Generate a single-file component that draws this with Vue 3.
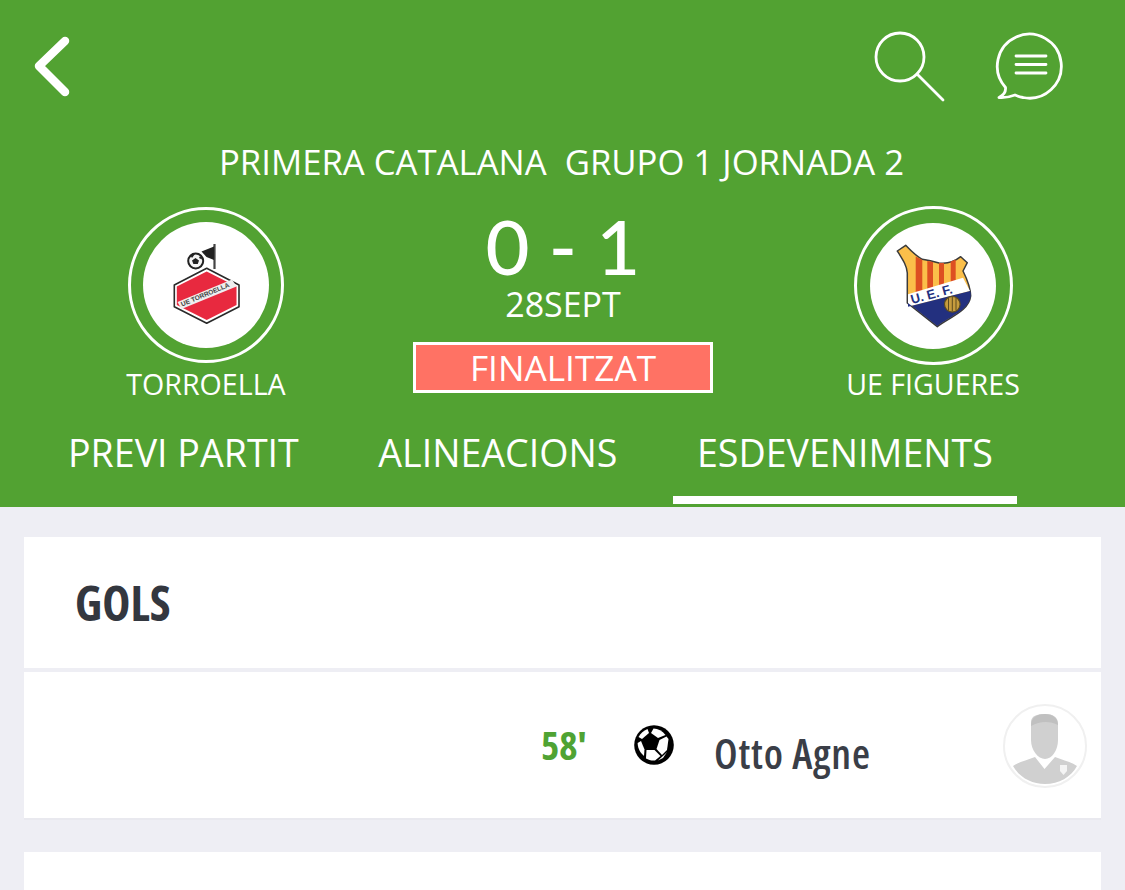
<script setup>
const tabs = [
  { label: 'PREVI PARTIT', active: false },
  { label: 'ALINEACIONS', active: false },
  { label: 'ESDEVENIMENTS', active: true }
]
</script>

<template>
  <div class="page">
    <header class="head">
      <div class="topbar">
        <svg class="back" width="50" height="70" viewBox="0 0 50 70" fill="none">
          <path d="M34 6 L8 31 L34 57" stroke="#fff" stroke-width="8.5" stroke-linecap="round" stroke-linejoin="round" />
        </svg>
        <div class="actions">
          <svg width="76" height="76" viewBox="0 0 76 76" fill="none" stroke="#fff" stroke-width="2.8">
            <circle cx="27" cy="27" r="24" />
            <path d="M44 44 L70 70" stroke-linecap="round" />
          </svg>
          <svg class="bubble" width="80" height="80" viewBox="0 0 80 80" fill="none" stroke="#fff" stroke-width="2.8" stroke-linejoin="round">
            <path d="M33 69.5 A32 32 0 1 0 15.5 59.5 C16 64 14 67 9 69.5 C15 70 21 68.5 25 67 C27.5 68 30 69 33 69.5 Z" />
            <path d="M26 28 H56 M26 36.5 H56 M26 45 H56" stroke-linecap="round" />
          </svg>
        </div>
      </div>

      <div class="title">PRIMERA CATALANA&nbsp;&nbsp;GRUPO 1 JORNADA 2</div>

      <div class="match">
        <div class="team team-left">
          <div class="ring">
            <div class="crest">
              <svg width="126" height="126" viewBox="0 0 126 126">
                <path d="M71.5 22 V47" stroke="#444" stroke-width="2.2" />
                <path d="M71 24.5 L58.5 29.5 L63.5 35 L71 38 Z" fill="#222" />
                <circle cx="52.7" cy="39" r="7.5" fill="#f4f4f4" stroke="#222" stroke-width="2" />
                <path d="M52.5 36 L56 38.5 L54.8 42 L50.4 42 L49 38.5 Z M47 33 L52 32 L49 36 Z M57 34 L60 38 L56 36 Z" fill="#222" />
                <path d="M63.7 46.3 L96 63 V84.7 L63.7 101.3 L31.3 84.7 V63 Z" fill="#fff" stroke="#2a2a2a" stroke-width="1.6" stroke-linejoin="round" />
                <path d="M63.7 49.5 L93.5 64.5 V83 L63.7 98 L33.8 83 V64.5 Z" fill="#e8293f" />
                <path d="M34.5 80 L89 57.5 L93.5 64.5 L38.5 87 Z" fill="#eee" />
                <text class="crest-t1" x="0" y="0" transform="translate(39 84.5) rotate(-22.5)">UE TORROELLA</text>
              </svg>
            </div>
          </div>
          <div class="name">TORROELLA</div>
        </div>

        <div class="center">
          <div class="score">0 - 1</div>
          <div class="date">28SEPT</div>
          <div class="status">FINALITZAT</div>
        </div>

        <div class="team team-right">
          <div class="ring ring-big">
            <div class="crest">
              <svg width="126" height="126" viewBox="0 0 126 126">
                <path d="M35.7 22.3 L27.3 28 C33 37 37 43 37.3 50 L37.3 80 L67.3 103.7 C80 94 99 88 100.7 73 C100.5 64 97 56 93 48 L97.3 39.7 L90.7 33.7 C84 39 76 41 69 40 C62 38 57 37 52.3 36.3 C46 33 41 28 35.7 22.3 Z" fill="#fbbf4a" stroke="#3a3a3a" stroke-width="1.5" stroke-linejoin="round" />
                <path d="M45.7 33.5 L52.3 37 V69 L45.7 71 Z M57.3 38 L63 39 V65 L57.3 66.7 Z M69 40 L74 40 V62.5 L69 64 Z M80.7 38.5 L85.7 36.5 V59 L80.7 60.5 Z" fill="#dd4f22" />
                <path d="M38 71.3 L93 54.7 L100 68 L38 83.7 Z" fill="#fff" />
                <path d="M38 83.7 L100 68 C101 70 100.7 71 100.7 73 C99 87 80 93.5 67.3 103 L38 80 Z" fill="#23307f" />
                <text class="crest-t2" x="0" y="0" transform="translate(42 81) rotate(-15)">U. E. F.</text>
                <circle cx="82.3" cy="81.3" r="7.8" fill="#c79c3e" stroke="#5e4c1d" stroke-width="1.2" />
                <path d="M78.5 75 V87.5 M82.3 74 V88.5 M86 75 V87.5" stroke="#5e4c1d" stroke-width="1" />
              </svg>
            </div>
          </div>
          <div class="name">UE FIGUERES</div>
        </div>
      </div>

      <nav class="tabs">
        <div v-for="t in tabs" :key="t.label" class="tab" :class="{ on: t.active }">{{ t.label }}</div>
      </nav>
    </header>

    <main class="body">
      <section class="card">
        <h2 class="card-title">GOLS</h2>
        <div class="goal">
          <span class="minute">58'</span>
          <svg class="ball" width="40" height="40" viewBox="0 0 40 40">
            <circle cx="20" cy="20" r="19.8" fill="#000" />
            <path d="M4.5 12 L8 14 L15 8 L13.5 4 C9.5 5.5 6.5 8.5 4.5 12 Z" fill="#fff" />
            <path d="M17 8 L24 13 L31.5 10 C28.5 6 24 3.8 19.5 3.5 Z" fill="#fff" />
            <path d="M25.5 15 L22.5 24 L28 30 L33 25 L34.5 14 L32.5 11.5 Z" fill="#fff" />
            <path d="M12.5 25 L20.5 25 L26.5 31 L21 35.5 C17.5 35.8 14.5 35 12 33.5 Z" fill="#fff" />
            <path d="M7 16 L10.5 24.5 L10 31 C6.5 28 4 24 3.6 18 Z" fill="#fff" />
            <path d="M30 30 L33 27 L29 33 L24 35.5 Z" fill="#fff" />
          </svg>
          <span class="player">Otto Agne</span>
          <div class="avatar">
            <svg width="80" height="80" viewBox="0 0 80 80">
              <path d="M26 16 C26 10 32 8 40 8 C48 8 53 11 53 18 L53 34 C53 44 47 53 40 53 C33 53 26 44 26 34 Z" fill="#d0d0d0" />
              <path d="M26 20 C26 11 32 8 40 8 C48 8 53 12 53 19 C45 15 35 15 26 20 Z" fill="#c0c0c0" />
              <path d="M8 60 C14 56 22 54 30 51 L39.5 63 L50 51 C58 54 66 56 72 60 C66 71 54 78 40 78 C26 78 14 71 8 60 Z" fill="#d0d0d0" />
              <path d="M55 59 H62 V65 L58.5 69 L55 65 Z" fill="#f4f4f4" />
            </svg>
          </div>
        </div>
      </section>
      <section class="card next"></section>
    </main>
  </div>
</template>

<style>
html, body { margin: 0; padding: 0; background: #eeeef4; }
</style>

<style scoped>
.page {
  width: 1125px;
  height: 890px;
  overflow: hidden;
  background: #eeeef4;
  font-family: "Open Sans", "Liberation Sans", sans-serif;
}
.head {
  height: 507px;
  background: #52a232;
  color: #fff;
  display: flex;
  flex-direction: column;
  font-weight: 400;
}
.topbar {
  height: 140px;
  padding: 35px 55px 0 31px;
  box-sizing: border-box;
  display: flex;
  justify-content: space-between;
  align-items: flex-start;
}
.back { display: block; }
.actions {
  display: flex;
  gap: 41px;
  margin-top: -5px;
}
.bubble { margin-top: -2px; }
.title {
  height: 44px;
  line-height: 44px;
  text-align: center;
  font-size: 34.7px;
  padding-right: 2px;
  white-space: nowrap;
}
.match {
  margin-top: 22px;
  display: grid;
  grid-template-columns: 413px 300px 412px;
  height: 196px;
}
.team {
  display: flex;
  flex-direction: column;
  align-items: center;
}
.team-left { padding-right: 1px; }
.team-right { margin-left: 28px; }
.ring {
  width: 156px;
  height: 156px;
  box-sizing: border-box;
  border: 3px solid #fff;
  border-radius: 50%;
  display: flex;
  align-items: center;
  justify-content: center;
  margin-top: 1px;
}
.ring-big { width: 159px; height: 159px; margin-top: 0; }
.crest {
  width: 126px;
  height: 126px;
  border-radius: 50%;
  background: #fff;
  overflow: hidden;
}
.crest svg { display: block; }
.crest-t1 {
  font: 700 6.6px "Liberation Sans", sans-serif;
  fill: #444;
}
.crest-t2 {
  font: 700 13px "Liberation Sans", sans-serif;
  fill: #23307f;
}
.name {
  font-size: 28.6px;
  line-height: 36px;
  margin-top: 3px;
  white-space: nowrap;
}
.team-right .name { margin-top: 1px; }
.center {
  display: flex;
  flex-direction: column;
  align-items: center;
}
.score {
  font-family: Lato, "DejaVu Sans", sans-serif;
  font-weight: 500;
  font-size: 76px;
  line-height: 76px;
  margin-top: 2px;
  white-space: nowrap;
}
.date {
  font-size: 34px;
  line-height: 36px;
  margin-top: 2px;
}
.status {
  margin-top: 20px;
  width: 300px;
  height: 51px;
  box-sizing: border-box;
  border: 3px solid #fff;
  background: #ff7264;
  font-size: 35.2px;
  line-height: 45px;
  text-align: center;
  white-space: nowrap;
}
.tabs {
  margin-top: 6px;
  padding-left: 44px;
  display: flex;
  gap: 31.5px;
}
.tab {
  box-sizing: border-box;
  height: 93px;
  padding: 0 24px;
  font-size: 37.6px;
  line-height: 90px;
  white-space: nowrap;
}
.tab.on {
  height: 96px;
  border-bottom: 8px solid #fff;
}
.body {
  padding: 30px 24px 0;
}
.card {
  background: #fff;
}
.card-title {
  margin: 0;
  height: 135px;
  padding-left: 51px;
  box-sizing: border-box;
  font-stretch: 75%;
  font-weight: 700;
  font-size: 47.5px;
  line-height: 131px;
  color: #33373f;
  border-bottom: 4px solid #eeeef4;
}
.goal {
  height: 148px;
  box-sizing: border-box;
  border-bottom: 2px solid #e9e9ef;
  padding-left: 517px;
  padding-right: 14px;
  display: flex;
  align-items: center;
}
.minute {
  width: 44px;
  font-stretch: 75%;
  font-weight: 700;
  font-size: 39px;
  color: #4fa333;
  white-space: nowrap;
  margin-top: -1px;
}
.ball { margin-left: 49px; margin-top: 0; flex: none; }
.player {
  margin-left: 40px;
  font-stretch: 75%;
  font-weight: 600;
  font-size: 41.5px;
  letter-spacing: 0.8px;
  color: #3a3e47;
  white-space: nowrap;
  margin-top: 16px;
}
.avatar {
  margin-left: auto;
  width: 84px;
  height: 84px;
  box-sizing: border-box;
  border: 2px solid #f0f0f0;
  border-radius: 50%;
  display: flex;
  align-items: center;
  justify-content: center;
  margin-top: 1px;
}
.next {
  margin-top: 32px;
  height: 40px;
}
</style>
